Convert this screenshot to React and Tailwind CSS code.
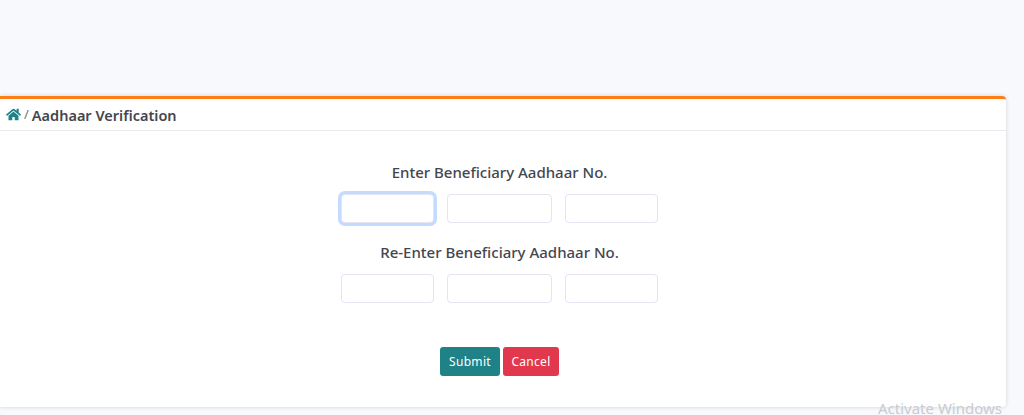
import React from "react";
import { FaHome } from "react-icons/fa";

const SANS = "font-['Noto_Sans',sans-serif]";
const INPUT = "h-[29px] rounded-[4px] border border-[#e4e4f4] bg-white outline-none";

function AadhaarRow({ focusFirst = false }) {
  return (
    <div className="flex gap-[13px]">
      <input
        type="text"
        className={`${INPUT} w-[93px] ${focusFirst ? "border-[#86b7fe] shadow-[0_0_0_3px_#c2dbfe]" : ""}`}
      />
      <input type="text" className={`${INPUT} w-[105px]`} />
      <input type="text" className={`${INPUT} w-[93px]`} />
    </div>
  );
}

export default function App() {
  return (
    <div className={`relative h-[415px] w-[1024px] overflow-hidden bg-[#f8f9fd] pt-[96px] pr-[18px] ${SANS}`}>
      <div className="h-[311px] rounded-r-[4px] border-t-[3px] border-[#fd7e14] bg-white shadow-[0_0_4px_rgba(0,0,0,0.16)]">
        {/* Breadcrumb */}
        <div className="flex h-[32px] items-center gap-[3px] border-b border-[#e9eaee] pl-[6px]">
          <FaHome className="h-[15px] w-[15px] text-[#1f8287]" />
          <span className="text-[13px] text-[#6c757d]">/</span>
          <h1 className="mt-[2px] text-[14.5px] font-semibold text-[#44464f]">Aadhaar Verification</h1>
        </div>

        {/* Form */}
        <div className="flex flex-col items-center pt-[29px] pr-[7px]">
          <p className="h-[24px] text-[15px] leading-[24px] font-medium text-[#44464f]">Enter Beneficiary Aadhaar No.</p>
          <div className="mt-[10px]">
            <AadhaarRow focusFirst />
          </div>
          <p className="mt-[17px] h-[24px] text-[15px] leading-[24px] font-medium text-[#44464f]">Re-Enter Beneficiary Aadhaar No.</p>
          <div className="mt-[10px]">
            <AadhaarRow />
          </div>
          <div className="mt-[44px] flex gap-[3px]">
            <button className="h-[29px] w-[60px] rounded-[3px] bg-[#1f8287] text-[12px] tracking-[0.3px] text-white">Submit</button>
            <button className="h-[29px] w-[56px] rounded-[3px] bg-[#e2384d] text-[12px] tracking-[0.3px] text-white">Cancel</button>
          </div>
        </div>
      </div>

      {/* OS watermark */}
      <span className="absolute top-[398px] left-[878px] text-[15px] leading-[20px] text-[#c9cbd0]">Activate Windows</span>
    </div>
  );
}
